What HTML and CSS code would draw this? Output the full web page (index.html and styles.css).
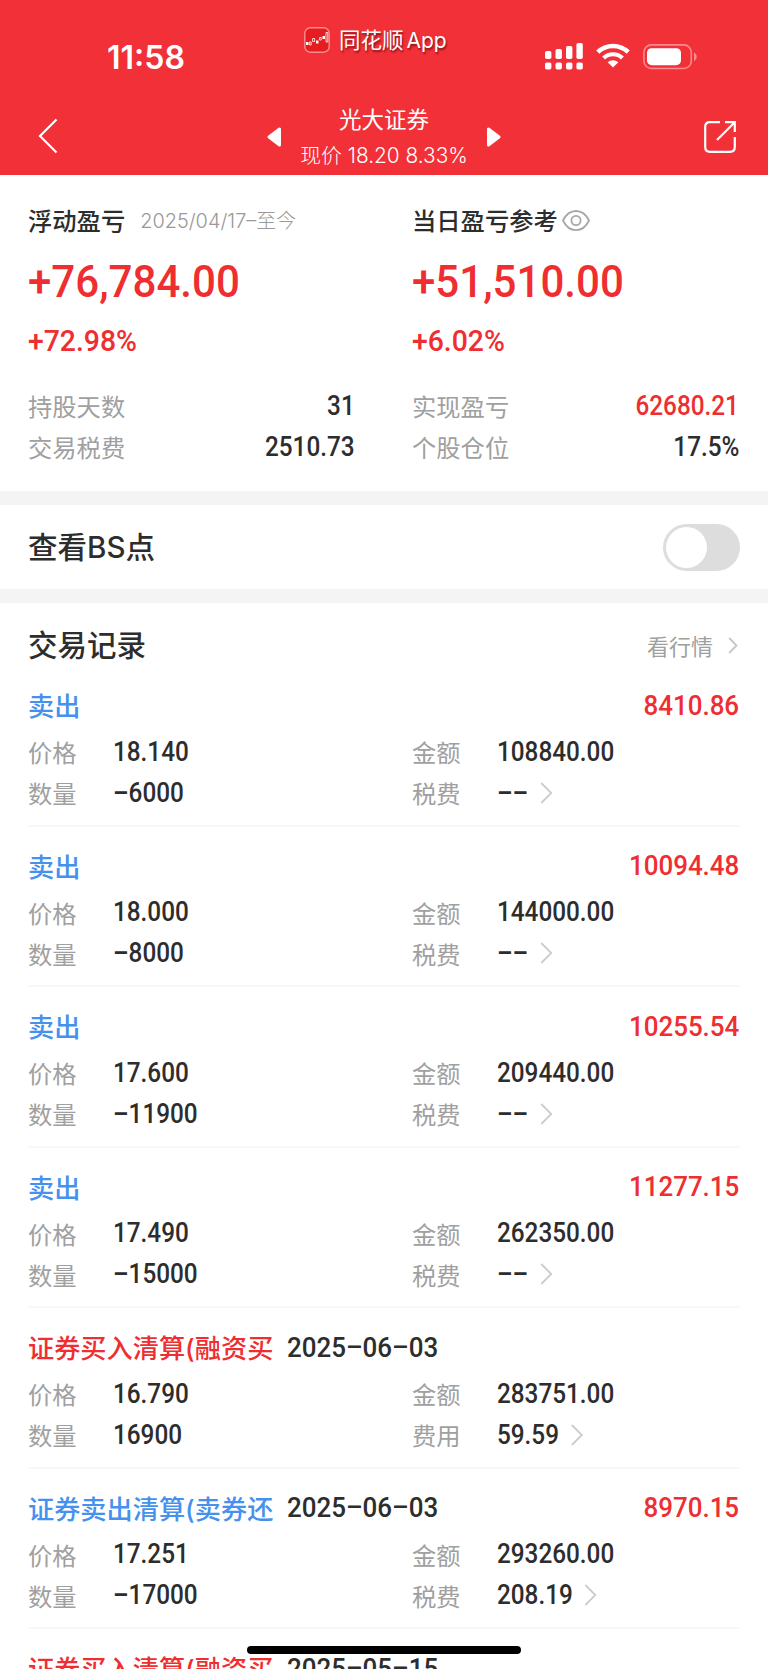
FILE: index.html
```html
<!DOCTYPE html>
<html lang="zh-CN">
<head>
  <meta charset="UTF-8" />
  <meta name="viewport" content="width=device-width, initial-scale=1.0"/>
  <title>光大证券</title>
  <link rel="stylesheet" href="styles.css">
</head>
<body>
  <header>
    <div class="status-bar">
      <span class="time">11:58</span>
      <div class="app-tag">
        <svg width="26" height="26" viewBox="0 0 26 26">
          <rect x="0.8" y="0.8" width="24.4" height="24.4" rx="5.5" fill="#e51c20" stroke="#fa8c90" stroke-width="1.4"/>
          <path d="M2 16.5h2.5M12 15h2.5M18.5 10.5h2.5" stroke="#fff" stroke-width="3.2"/>
          <path d="M5.6 15h1.6v3H5.6zM8.6 11.5h2v3h-2zM15.6 10.5h1.6v2.5h-1.6zM22 5.5h1.8v9.5H22z" fill="none" stroke="#fff" stroke-width="0.8"/>
        </svg>
        <span>同花顺<span class="latin">App</span></span>
      </div>
      <div class="indicators">
        <svg width="38" height="27" viewBox="0 0 38 27" fill="#fff">
          <rect x="0" y="8" width="6.4" height="8" rx="1.7"/>
          <rect x="10.5" y="6" width="6.4" height="10" rx="1.7"/>
          <rect x="21" y="3" width="6.4" height="13" rx="1.7"/>
          <rect x="31.4" y="0" width="6.4" height="16" rx="1.7"/>
          <rect x="0" y="19.4" width="6.4" height="7" rx="1.7"/>
          <rect x="10.5" y="19.4" width="6.4" height="7" rx="1.7"/>
          <rect x="21" y="19.4" width="6.4" height="7" rx="1.7"/>
          <rect x="31.4" y="19.4" width="6.4" height="7" rx="1.7"/>
        </svg>
        <svg class="wifi" width="34" height="25" viewBox="0 0 34 25">
          <path d="M1.8 9.2a21.8 21.8 0 0 1 30.4 0" fill="none" stroke="#fff" stroke-width="4.4"/>
          <path d="M7.6 15a13.6 13.6 0 0 1 18.8 0" fill="none" stroke="#fff" stroke-width="4.2"/>
          <path d="M11.7 19.3a7.8 7.8 0 0 1 10.6 0L17 24.6z" fill="#fff"/>
        </svg>
        <svg class="battery" width="55" height="26" viewBox="0 0 55 26">
          <rect x="0.9" y="0.9" width="47.4" height="23.6" rx="7.5" fill="none" stroke="#f98a8e" stroke-width="1.6"/>
          <rect x="4" y="4.2" width="34" height="17" rx="4.6" fill="#fff"/>
          <path d="M51 8.5c3.6 1.2 3.6 7.2 0 8.4z" fill="#f98a8e"/>
        </svg>
      </div>
    </div>
    <nav>
      <svg class="back" width="20" height="36" viewBox="0 0 20 36"><path d="M18.5 1.5L2 18l16.5 16.5" fill="none" stroke="#fff" stroke-width="2.2"/></svg>
      <div class="stock">
        <svg width="15" height="20" viewBox="0 0 15 20"><path d="M12.5 2v16L2 10z" fill="#fff" stroke="#fff" stroke-width="3" stroke-linejoin="round"/></svg>
        <div class="stock-text">
          <div class="stock-name">光大证券</div>
          <div class="stock-price">现价 18.20 8.33%</div>
        </div>
        <svg width="15" height="20" viewBox="0 0 15 20"><path d="M2.5 2v16L13 10z" fill="#fff" stroke="#fff" stroke-width="3" stroke-linejoin="round"/></svg>
      </div>
      <svg class="share" width="32" height="32" viewBox="0 0 32 32" fill="none" stroke="#fff" stroke-width="2.2">
        <path d="M16 1.2H6Q1.2 1.2 1.2 6v20q0 4.800 4.800 4.800h20q4.800 0 4.800-4.800V16"/>
        <path d="M21 1.2h9.800V11M30 2L13 19"/>
      </svg>
    </nav>
  </header>

  <section class="summary">
    <div class="col">
      <div class="label-line"><b>浮动盈亏</b><span class="period">2025/04/17–至今</span></div>
      <div class="num big">+76,784.00</div>
      <div class="num percent">+72.98%</div>
      <div class="pair"><span>持股天数</span><span class="num">31</span></div>
      <div class="pair"><span>交易税费</span><span class="num">2510.73</span></div>
    </div>
    <div class="col">
      <div class="label-line"><b>当日盈亏参考</b>
        <svg class="eye" width="28" height="21" viewBox="0 0 28 21" fill="none" stroke="#a8a8a8" stroke-width="1.8">
          <path d="M1 10.5C7-2.2 21-2.2 27 10.5C21 23.2 7 23.2 1 10.5z"/>
          <circle cx="14" cy="10.5" r="4.6"/>
        </svg>
      </div>
      <div class="num big">+51,510.00</div>
      <div class="num percent">+6.02%</div>
      <div class="pair"><span>实现盈亏</span><span class="num red">62680.21</span></div>
      <div class="pair"><span>个股仓位</span><span class="num">17.5%</span></div>
    </div>
  </section>

  <section class="bs-row">
    <h2>查看<span class="latin">BS</span>点</h2>
    <div class="switch"></div>
  </section>

  <section class="records">
    <div class="records-head">
      <h2>交易记录</h2>
      <span class="quote">看行情 <svg width="10" height="17" viewBox="0 0 10 17"><path d="M1.2 1l7.3 7.5L1.2 16" fill="none" stroke="#c8c8c8" stroke-width="1.9"/></svg></span>
    </div>
    <div id="list"></div>
  </section>
  <div class="home-bar"></div>

  <script>
    const records = [
      { type: "sell", name: "卖出", profit: "8410.86", price: "18.140", amount: "108840.00", count: "–6000", feeName: "税费", fee: "––" },
      { type: "sell", name: "卖出", profit: "10094.48", price: "18.000", amount: "144000.00", count: "–8000", feeName: "税费", fee: "––" },
      { type: "sell", name: "卖出", profit: "10255.54", price: "17.600", amount: "209440.00", count: "–11900", feeName: "税费", fee: "––" },
      { type: "sell", name: "卖出", profit: "11277.15", price: "17.490", amount: "262350.00", count: "–15000", feeName: "税费", fee: "––" },
      { type: "buy", name: "证券买入清算(融资买", date: "2025–06–03", price: "16.790", amount: "283751.00", count: "16900", feeName: "费用", fee: "59.59" },
      { type: "sell", name: "证券卖出清算(卖券还", date: "2025–06–03", profit: "8970.15", price: "17.251", amount: "293260.00", count: "–17000", feeName: "税费", fee: "208.19" },
      { type: "buy", name: "证券买入清算(融资买", date: "2025–05–15" }
    ];
    const arrow = '<svg class="arrow" width="14" height="22" viewBox="0 0 14 22"><path d="M1.2 1l11 10-11 10" fill="none" stroke="#ccc" stroke-width="2"/></svg>';

    function field(name, value, extra) {
      return `<div class="field"><span>${name}</span><span class="num">${value}${extra || ""}</span></div>`;
    }

    let html = "";
    for (const r of records) {
      html += `<div class="record"><div class="record-title"><span class="${r.type}">${r.name}</span>`;
      if (r.date) html += `<span class="num date">${r.date}</span>`;
      if (r.profit) html += `<span class="num profit">${r.profit}</span>`;
      html += '</div>';
      if (r.price) {
        html += '<div class="fields">' + field("价格", r.price) + field("金额", r.amount)
          + field("数量", r.count) + field(r.feeName, r.fee, arrow) + '</div>';
      }
      html += '</div>';
    }
    document.getElementById("list").innerHTML = html;
  </script>
</body>
</html>
```
FILE: styles.css
```css
* {
  box-sizing: border-box;
}
html {
  overflow: hidden;
}
body {
  margin: 0;
  height: 1669px;
  overflow: hidden;
  position: relative;
  background: #fff;
  color: #2d2d2d;
  font-family: Inter, "Noto Sans CJK SC", sans-serif;
}
svg {
  display: block;
  flex: none;
}
header {
  height: 175px;
  background: #f23038;
  color: #fff;
}
.status-bar {
  height: 96px;
  display: grid;
  grid-template-columns: 304px 241px 1fr;
  align-items: start;
}
.time {
  padding: 38px 0 0 107px;
  font-size: 32px;
  line-height: 40px;
  font-weight: 600;
}
.app-tag {
  display: flex;
  align-items: center;
  gap: 9px;
  height: 26px;
  margin-top: 27px;
  font-family: "Noto Sans CJK SC", sans-serif;
  font-size: 21.5px;
  line-height: 26px;
  white-space: nowrap;
  text-shadow: 1px 2px 2px rgba(60, 0, 0, 0.6);
}
.latin {
  font-family: Inter, sans-serif;
}
.app-tag .latin {
  font-size: 21px;
  margin-left: 3px;
}
.indicators {
  display: flex;
  margin-top: 43px;
}
.wifi {
  margin-left: 13px;
}
.battery {
  margin-left: 13px;
  margin-top: 1px;
}
nav {
  height: 79px;
  padding: 0 32px 0 38px;
  display: grid;
  grid-template-columns: 229px 234px 1fr;
  align-items: start;
}
.back {
  margin-top: 22px;
}
.stock {
  display: flex;
  justify-content: space-between;
}
.stock > svg {
  margin-top: 31px;
}
.stock-text {
  text-align: center;
  white-space: nowrap;
  padding-top: 9px;
}
.stock-name {
  font-size: 22.5px;
  line-height: 30px;
}
.stock-price {
  margin-top: 6px;
  font-size: 20.8px;
  line-height: 30px;
  font-weight: 300;
}
.share {
  justify-self: end;
  margin-top: 25px;
}

/* DIN-like figures */
.num {
  display: inline-block;
  font-family: Roboto, sans-serif;
  font-size: 27px;
  font-weight: 500;
  color: #2d2d2d;
  transform: scaleX(0.9);
  transform-origin: left center;
}
.num.red, .num.big, .num.percent, .num.profit {
  color: #ee2e30;
}
.summary {
  height: 330px;
  padding: 26px 29px 0 28px;
  display: grid;
  grid-template-columns: 327px 327px;
  column-gap: 57px;
  border-bottom: 14px solid #f4f4f4;
}
.label-line {
  height: 37px;
  display: flex;
  align-items: center;
}
.label-line b {
  font-size: 24.3px;
  font-weight: 500;
}
.period {
  margin-left: 15px;
  font-size: 19.9px;
  font-weight: 300;
  color: #999;
}
.eye {
  margin-left: 4px;
  margin-top: 2px;
}
.num.big {
  display: block;
  margin-top: 16px;
  font-size: 45px;
  line-height: 56px;
  transform: scaleX(0.935);
}
.num.percent {
  display: block;
  margin-top: 11px;
  font-size: 30px;
  line-height: 40px;
  margin-bottom: 24px;
  transform: scaleX(0.945);
}
.pair {
  display: flex;
  justify-content: space-between;
  align-items: center;
  height: 41px;
  font-size: 24.3px;
  font-weight: 400;
  color: #a0a0a0;
}
.pair .num {
  transform-origin: right center;
}
h2 {
  margin: 0;
  font-size: 29.5px;
  line-height: 40px;
  font-weight: 500;
}
.bs-row {
  height: 98px;
  padding: 0 28px;
  display: flex;
  justify-content: space-between;
  align-items: center;
  border-bottom: 14px solid #f4f4f4;
}
.switch {
  width: 77px;
  height: 47px;
  padding: 3px;
  border-radius: 24px;
  background: #ddd;
}
.switch::before {
  content: "";
  display: block;
  width: 41px;
  height: 41px;
  border-radius: 50%;
  background: #fff;
}
.records {
  padding: 0 28px;
}
.records-head {
  height: 63px;
  padding: 22px 2px 0 0;
  display: flex;
  justify-content: space-between;
  align-items: flex-start;
}
.quote {
  display: flex;
  align-items: center;
  gap: 15px;
  height: 40px;
  font-size: 22px;
  font-weight: 400;
  color: #a0a0a0;
}
.record {
  height: 160.5px;
  padding: 19px 1px 0 0;
  border-bottom: 2px solid #f8f8f8;
}
.record-title {
  display: flex;
  align-items: center;
  height: 40px;
  font-size: 26.2px;
  font-weight: 500;
  white-space: nowrap;
}
.sell {
  color: #4691ee;
}
.buy {
  color: #ee2e30;
}
.record-title .num {
  font-size: 28.5px;
  transform: scaleX(0.91);
}
.date {
  margin-left: 14px;
}
.record-title .profit {
  margin-left: auto;
  transform-origin: right center;
}
.fields {
  margin-top: 6px;
  display: grid;
  grid-template-columns: 384px 1fr;
}
.field {
  display: flex;
  align-items: center;
  height: 41px;
  font-size: 24.3px;
  font-weight: 400;
  color: #a0a0a0;
}
.field .num {
  margin-left: 36px;
}
.arrow {
  display: inline-block;
  margin-left: 13px;
  vertical-align: -2px;
}
.home-bar {
  position: absolute;
  left: 247px;
  bottom: 15px;
  width: 274px;
  height: 8px;
  border-radius: 4px;
  background: #000;
}
```
